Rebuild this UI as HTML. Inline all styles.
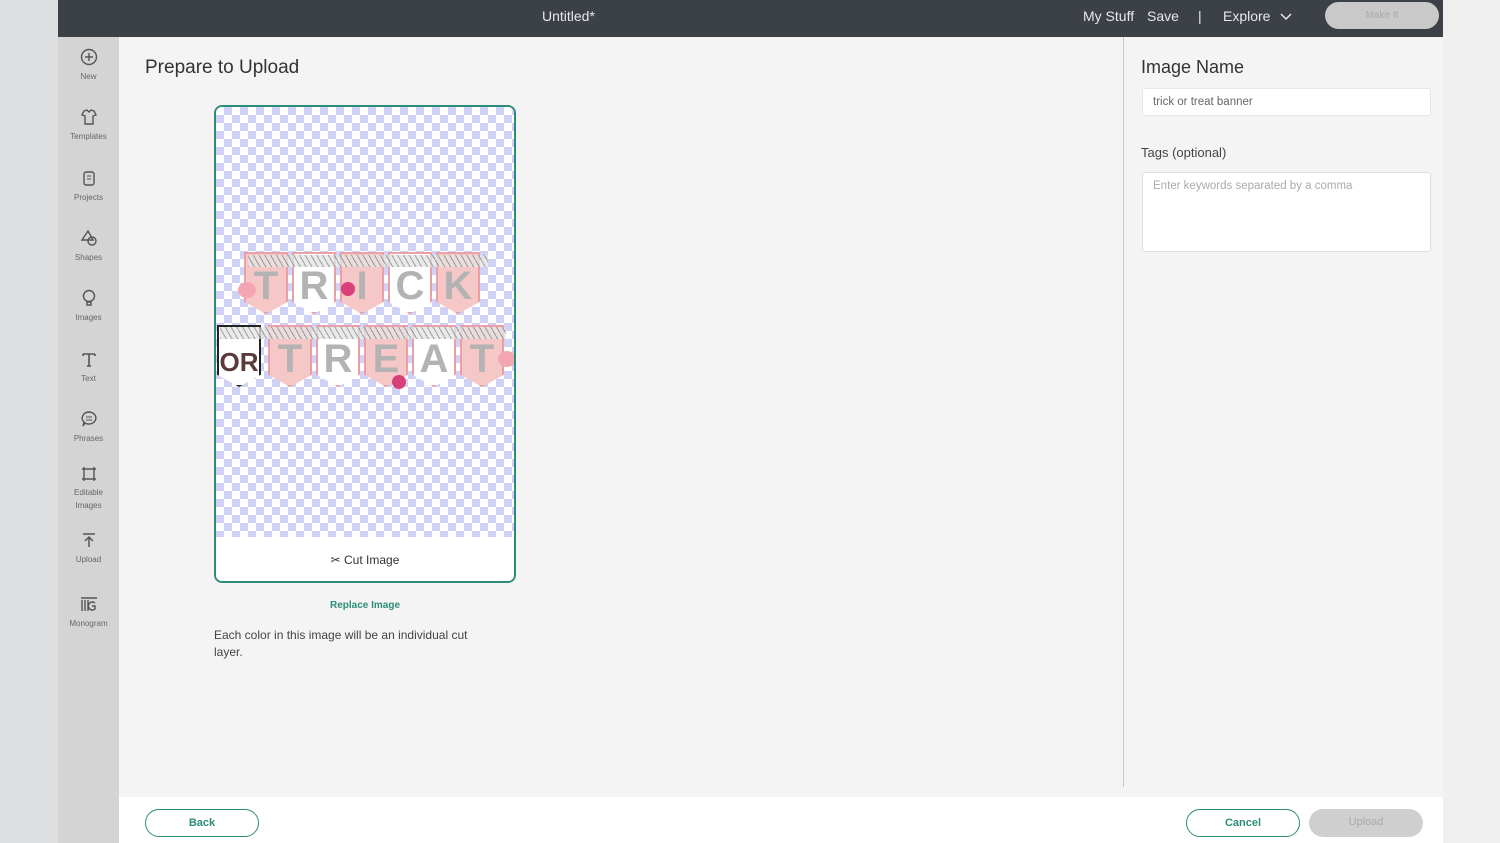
<!DOCTYPE html>
<html><head><meta charset="utf-8"><style>
*{margin:0;padding:0;box-sizing:border-box}
body{width:1500px;height:843px;position:relative;overflow:hidden;background:#efefef;font-family:"Liberation Sans",sans-serif;color:#333}
.abs{position:absolute}
#leftstrip{left:0;top:0;width:58px;height:843px;background:#dedfe0}
#top{left:58px;top:0;width:1385px;height:37px;background:#3c4047;color:#fff}
#side{left:58px;top:37px;width:61px;height:806px;background:#d4d4d4}
#main{left:119px;top:37px;width:1324px;height:806px;background:#f4f4f4}
#rightstrip{left:1443px;top:0;width:57px;height:843px;background:#f0f0f0}
.si{position:absolute;left:58px;width:61px;text-align:center;font-size:8px;color:#666}
.si svg{display:block;margin:0 auto 6px}
.card{left:214px;top:105px;width:302px;height:478px;border:2px solid #2d8c78;border-radius:8px;background:#fff;overflow:hidden}
.check{position:absolute;left:0;top:0;width:298px;height:430px;background-color:#fff;background-image:linear-gradient(45deg,#cfd1f5 25%,transparent 25%,transparent 75%,#cfd1f5 75%),linear-gradient(45deg,#cfd1f5 25%,transparent 25%,transparent 75%,#cfd1f5 75%);background-size:16px 16px;background-position:0 0,8px 8px}
.pen{position:absolute;width:44px;height:62px;background:#f6c7c7;border:2px solid #eaa0a6;clip-path:polygon(0 0,100% 0,100% 80%,50% 100%,0 80%);text-align:center;font:bold 40px "Liberation Sans",sans-serif;color:#b3b3b3;padding-top:10px}
.pen.w{background:#fff}
.web{position:absolute;height:12px;background:repeating-linear-gradient(60deg,#888 0 1px,#e4e4e4 1px 5px);opacity:.8}
.btn{position:absolute;height:28px;border-radius:14px;font-size:11px;font-weight:bold;text-align:center;line-height:26px}
</style></head><body>
<div id="leftstrip" class="abs"></div>
<div id="main" class="abs"></div>
<div id="side" class="abs"></div>
<div id="rightstrip" class="abs"></div>
<div id="top" class="abs">
 <div class="abs" style="left:484px;top:8px;font-size:14px;color:#e8e8e8">Untitled*</div>
 <div class="abs" style="left:1025px;top:8px;font-size:14px;color:#e8e8e8">My Stuff</div>
 <div class="abs" style="left:1089px;top:8px;font-size:14px;color:#e8e8e8">Save</div>
 <div class="abs" style="left:1140px;top:8px;font-size:14px;color:#e8e8e8">|</div>
 <div class="abs" style="left:1165px;top:8px;font-size:14px;color:#e8e8e8">Explore</div>
 <svg class="abs" style="left:1221px;top:11px" width="14" height="10"><path d="M2 3l5 5 5-5" stroke="#e8e8e8" stroke-width="1.5" fill="none"/></svg>
 <div class="abs" style="left:1267px;top:2px;width:114px;height:27px;border-radius:14px;background:#c9c9c9;font-size:10px;color:#a9a9a9;text-align:center;line-height:27px">Make It</div>
</div>
<div class="si" style="top:48px"><svg width="18" height="18"><circle cx="9" cy="9" r="7.5" stroke="#555" stroke-width="1.4" fill="none"/><path d="M9 5v8M5 9h8" stroke="#555" stroke-width="1.4"/></svg>New</div>
<div class="si" style="top:108px"><svg width="18" height="18"><path d="M4 3l3-1 2 2 2-2 3 1 2 4-3 1v8H5V8L2 7z" stroke="#555" stroke-width="1.4" fill="none"/></svg>Templates</div>
<div class="si" style="top:169px"><svg width="18" height="18"><rect x="4" y="3" width="10" height="13" rx="2" stroke="#555" stroke-width="1.4" fill="none"/><path d="M7 7h4M7 10h4" stroke="#555"/></svg>Projects</div>
<div class="si" style="top:229px"><svg width="18" height="18"><path d="M8 2L2 11h11z" stroke="#555" stroke-width="1.4" fill="none"/><circle cx="12" cy="12" r="4" stroke="#555" stroke-width="1.4" fill="none"/></svg>Shapes</div>
<div class="si" style="top:289px"><svg width="18" height="18"><circle cx="9" cy="7" r="5.5" stroke="#555" stroke-width="1.4" fill="none"/><path d="M7 13h4v3H7z" stroke="#555" stroke-width="1.4" fill="none"/></svg>Images</div>
<div class="si" style="top:350px"><svg width="18" height="18"><path d="M3 4h12M9 4v12M3 4v2M15 4v2M7 16h4" stroke="#555" stroke-width="1.6" fill="none"/></svg>Text</div>
<div class="si" style="top:410px"><svg width="18" height="18"><path d="M9 2a7 6 0 1 1-4 11l-2 3 1-4A7 6 0 0 1 9 2z" stroke="#555" stroke-width="1.4" fill="none"/><path d="M6 7h6M6 10h6" stroke="#555"/></svg>Phrases</div>
<div class="si" style="top:465px;line-height:13px"><svg width="18" height="18" style="margin-bottom:3px"><path d="M4 4v10h10V4zM2 4h14M4 2v14M2 14h14M14 2v14" stroke="#555" stroke-width="1.4" fill="none"/></svg>Editable<br>Images</div>
<div class="si" style="top:531px"><svg width="18" height="18"><path d="M3 3h12M9 16V6M5 10l4-4 4 4" stroke="#555" stroke-width="1.5" fill="none"/></svg>Upload</div>
<div class="si" style="top:595px"><svg width="20" height="18"><path d="M2 3h16M3 5v11M6 5v11M9 5v11M16 8a4 4 0 1 0 0 6v-3h-3" stroke="#555" stroke-width="1.4" fill="none"/></svg>Monogram</div>

<div class="abs" style="left:145px;top:57px;font-size:19px;color:#333">Prepare to Upload</div>

<div class="abs card">
 <div class="check"></div>
 <div class="pen" style="left:28px;top:145px">T</div>
 <div class="pen w" style="left:76px;top:145px">R</div>
 <div class="pen" style="left:124px;top:145px">I</div>
 <div class="pen w" style="left:172px;top:145px">C</div>
 <div class="pen" style="left:220px;top:145px">K</div>
 <div class="pen w" style="left:1px;top:218px;border-color:#222;color:#5a3a3a;font-size:26px;padding-top:20px">OR</div>
 <div class="pen" style="left:52px;top:218px">T</div>
 <div class="pen w" style="left:100px;top:218px">R</div>
 <div class="pen" style="left:148px;top:218px">E</div>
 <div class="pen w" style="left:196px;top:218px">A</div>
 <div class="pen" style="left:244px;top:218px">T</div>
 <div class="web" style="left:32px;top:148px;width:240px"></div>
 <div class="web" style="left:4px;top:220px;width:286px"></div>
 <div class="abs" style="left:22px;top:175px;width:18px;height:16px;border-radius:50%;background:#f3a6b1"></div>
 <div class="abs" style="left:282px;top:244px;width:18px;height:16px;border-radius:50%;background:#f3a6b1"></div>
 <div class="abs" style="left:125px;top:175px;width:14px;height:14px;border-radius:50%;background:#d8407a"></div>
 <div class="abs" style="left:176px;top:268px;width:14px;height:14px;border-radius:50%;background:#d8407a"></div>
 <div class="abs" style="left:0;top:430px;width:298px;height:46px;background:#fff;text-align:center;font-size:12px;line-height:46px;color:#333">✂&nbsp;Cut Image</div>
</div>
<div class="abs" style="left:214px;top:600px;width:302px;text-align:center;font-size:10px;font-weight:bold;color:#2d8c78">Replace Image</div>
<div class="abs" style="left:214px;top:627px;width:300px;font-size:12px;line-height:17px;color:#444">Each color in this image will be an individual cut<br>layer.</div>

<div class="abs" style="left:1123px;top:37px;width:1px;height:750px;background:#c8c8c8"></div>
<div class="abs" style="left:1141px;top:57px;font-size:18px;color:#333">Image Name</div>
<div class="abs" style="left:1142px;top:88px;width:289px;height:28px;background:#fff;border:1px solid #e6e6e6;border-radius:3px;font-size:11.5px;color:#666;padding:7px 10px">trick or treat banner</div>
<div class="abs" style="left:1141px;top:145px;font-size:13px;color:#444">Tags (optional)</div>
<div class="abs" style="left:1142px;top:172px;width:289px;height:80px;background:#fff;border:1px solid #ddd;border-radius:3px;font-size:11.5px;color:#aaa;padding:7px 10px">Enter keywords separated by a comma</div>

<div class="abs" style="left:119px;top:797px;width:1324px;height:46px;background:#fff"></div>
<div class="btn" style="left:145px;top:809px;width:114px;border:1.5px solid #2d8c78;color:#2d8c78;background:#fff">Back</div>
<div class="btn" style="left:1186px;top:809px;width:114px;border:1.5px solid #2d8c78;color:#2d8c78;background:#fff">Cancel</div>
<div class="btn" style="left:1309px;top:809px;width:114px;background:#cfcfcf;color:#aaa;font-weight:normal">Upload</div>
</body></html>
